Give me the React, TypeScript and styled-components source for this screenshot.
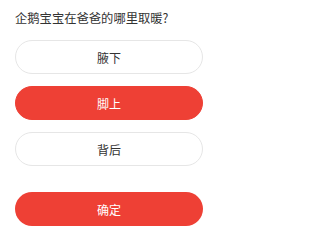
import styled, { createGlobalStyle } from 'styled-components'

const options = ['腋下', '脚上', '背后']
const selected = 1

const GlobalStyle = createGlobalStyle`
  body {
    margin: 0;
    background: #fff;
    font-family: 'Noto Sans CJK SC', 'Noto Sans', sans-serif;
  }
`

export default function App() {
  return (
    <>
      <GlobalStyle />
      <Page>
        <Question>企鹅宝宝在爸爸的哪里取暖?</Question>
        <Options>
          {options.map((label, i) => (
            <Choice key={label} $active={i === selected}>
              {label}
            </Choice>
          ))}
        </Options>
        <Confirm>确定</Confirm>
      </Page>
    </>
  )
}

const Page = styled.div`
  width: 213px;
  height: 246px;
  box-sizing: border-box;
  padding: 9px 10px 0 15px;
  display: flex;
  flex-direction: column;
`

const Question = styled.div`
  font-size: 12.3px;
  line-height: 18px;
  color: #333;
  margin-bottom: 13px;
`

const Options = styled.div`
  display: flex;
  flex-direction: column;
  gap: 12px;
`

const Choice = styled.div<{ $active: boolean }>`
  height: 34px;
  box-sizing: border-box;
  border-radius: 17px;
  border: 1px solid ${(p) => (p.$active ? '#ee4035' : '#e6e6e6')};
  background: ${(p) => (p.$active ? '#ee4035' : '#fff')};
  color: ${(p) => (p.$active ? '#fff' : '#333')};
  font-size: 12px;
  display: flex;
  align-items: center;
  justify-content: center;
`

const Confirm = styled.div`
  margin-top: 26px;
  height: 34px;
  border-radius: 17px;
  background: #ee4035;
  color: #fff;
  font-size: 12px;
  display: flex;
  align-items: center;
  justify-content: center;
`
